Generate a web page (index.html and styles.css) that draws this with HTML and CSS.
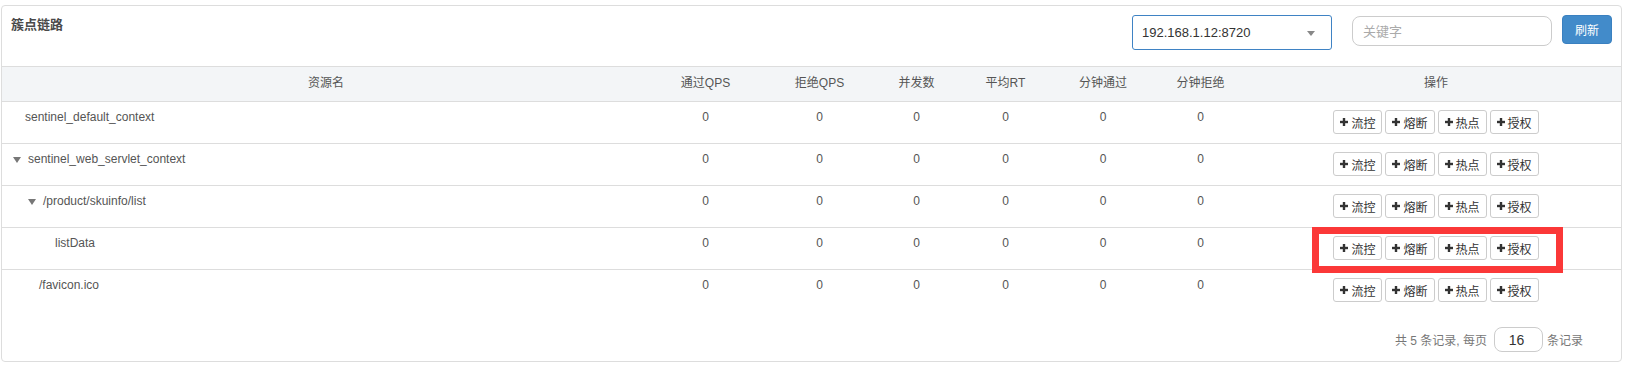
FILE: index.html
```html
<!DOCTYPE html>
<html lang="zh-CN">
<head>
<meta charset="utf-8">
<title>簇点链路</title>
<link rel="stylesheet" href="styles.css">
</head>
<body>
<div class="panel">
  <div class="panel-head">
    <div class="title">簇点链路</div>
    <div class="tools">
      <div class="select"><span class="select-text">192.168.1.12:8720</span><span class="caret"></span></div>
      <input class="search" type="text" placeholder="关键字">
      <button class="btn-refresh" type="button">刷新</button>
    </div>
  </div>

  <div class="table">
    <div class="tr thead">
      <div class="th">资源名</div>
      <div class="th">通过QPS</div>
      <div class="th">拒绝QPS</div>
      <div class="th">并发数</div>
      <div class="th">平均RT</div>
      <div class="th">分钟通过</div>
      <div class="th">分钟拒绝</div>
      <div class="th">操作</div>
    </div>

    <div class="tr">
      <div class="td name leaf-0">sentinel_default_context</div>
      <div class="td num">0</div><div class="td num">0</div><div class="td num">0</div>
      <div class="td num">0</div><div class="td num">0</div><div class="td num">0</div>
      <div class="td ops"><div class="btns">
        <button class="btn" type="button"><svg class="plus" viewBox="0 0 8 8"><rect x="2.8" y="0" width="2.4" height="8"/><rect x="0" y="2.8" width="8" height="2.4"/></svg>流控</button>
        <button class="btn" type="button"><svg class="plus" viewBox="0 0 8 8"><rect x="2.8" y="0" width="2.4" height="8"/><rect x="0" y="2.8" width="8" height="2.4"/></svg>熔断</button>
        <button class="btn" type="button"><svg class="plus" viewBox="0 0 8 8"><rect x="2.8" y="0" width="2.4" height="8"/><rect x="0" y="2.8" width="8" height="2.4"/></svg>热点</button>
        <button class="btn" type="button"><svg class="plus" viewBox="0 0 8 8"><rect x="2.8" y="0" width="2.4" height="8"/><rect x="0" y="2.8" width="8" height="2.4"/></svg>授权</button>
      </div></div>
    </div>

    <div class="tr">
      <div class="td name branch-0"><span class="tri"></span>sentinel_web_servlet_context</div>
      <div class="td num">0</div><div class="td num">0</div><div class="td num">0</div>
      <div class="td num">0</div><div class="td num">0</div><div class="td num">0</div>
      <div class="td ops"><div class="btns">
        <button class="btn" type="button"><svg class="plus" viewBox="0 0 8 8"><rect x="2.8" y="0" width="2.4" height="8"/><rect x="0" y="2.8" width="8" height="2.4"/></svg>流控</button>
        <button class="btn" type="button"><svg class="plus" viewBox="0 0 8 8"><rect x="2.8" y="0" width="2.4" height="8"/><rect x="0" y="2.8" width="8" height="2.4"/></svg>熔断</button>
        <button class="btn" type="button"><svg class="plus" viewBox="0 0 8 8"><rect x="2.8" y="0" width="2.4" height="8"/><rect x="0" y="2.8" width="8" height="2.4"/></svg>热点</button>
        <button class="btn" type="button"><svg class="plus" viewBox="0 0 8 8"><rect x="2.8" y="0" width="2.4" height="8"/><rect x="0" y="2.8" width="8" height="2.4"/></svg>授权</button>
      </div></div>
    </div>

    <div class="tr">
      <div class="td name branch-1"><span class="tri"></span>/product/skuinfo/list</div>
      <div class="td num">0</div><div class="td num">0</div><div class="td num">0</div>
      <div class="td num">0</div><div class="td num">0</div><div class="td num">0</div>
      <div class="td ops"><div class="btns">
        <button class="btn" type="button"><svg class="plus" viewBox="0 0 8 8"><rect x="2.8" y="0" width="2.4" height="8"/><rect x="0" y="2.8" width="8" height="2.4"/></svg>流控</button>
        <button class="btn" type="button"><svg class="plus" viewBox="0 0 8 8"><rect x="2.8" y="0" width="2.4" height="8"/><rect x="0" y="2.8" width="8" height="2.4"/></svg>熔断</button>
        <button class="btn" type="button"><svg class="plus" viewBox="0 0 8 8"><rect x="2.8" y="0" width="2.4" height="8"/><rect x="0" y="2.8" width="8" height="2.4"/></svg>热点</button>
        <button class="btn" type="button"><svg class="plus" viewBox="0 0 8 8"><rect x="2.8" y="0" width="2.4" height="8"/><rect x="0" y="2.8" width="8" height="2.4"/></svg>授权</button>
      </div></div>
    </div>

    <div class="tr">
      <div class="td name leaf-2">listData</div>
      <div class="td num">0</div><div class="td num">0</div><div class="td num">0</div>
      <div class="td num">0</div><div class="td num">0</div><div class="td num">0</div>
      <div class="td ops"><div class="btns">
        <button class="btn" type="button"><svg class="plus" viewBox="0 0 8 8"><rect x="2.8" y="0" width="2.4" height="8"/><rect x="0" y="2.8" width="8" height="2.4"/></svg>流控</button>
        <button class="btn" type="button"><svg class="plus" viewBox="0 0 8 8"><rect x="2.8" y="0" width="2.4" height="8"/><rect x="0" y="2.8" width="8" height="2.4"/></svg>熔断</button>
        <button class="btn" type="button"><svg class="plus" viewBox="0 0 8 8"><rect x="2.8" y="0" width="2.4" height="8"/><rect x="0" y="2.8" width="8" height="2.4"/></svg>热点</button>
        <button class="btn" type="button"><svg class="plus" viewBox="0 0 8 8"><rect x="2.8" y="0" width="2.4" height="8"/><rect x="0" y="2.8" width="8" height="2.4"/></svg>授权</button>
        <span class="highlight"></span>
      </div></div>
    </div>

    <div class="tr">
      <div class="td name leaf-1">/favicon.ico</div>
      <div class="td num">0</div><div class="td num">0</div><div class="td num">0</div>
      <div class="td num">0</div><div class="td num">0</div><div class="td num">0</div>
      <div class="td ops"><div class="btns">
        <button class="btn" type="button"><svg class="plus" viewBox="0 0 8 8"><rect x="2.8" y="0" width="2.4" height="8"/><rect x="0" y="2.8" width="8" height="2.4"/></svg>流控</button>
        <button class="btn" type="button"><svg class="plus" viewBox="0 0 8 8"><rect x="2.8" y="0" width="2.4" height="8"/><rect x="0" y="2.8" width="8" height="2.4"/></svg>熔断</button>
        <button class="btn" type="button"><svg class="plus" viewBox="0 0 8 8"><rect x="2.8" y="0" width="2.4" height="8"/><rect x="0" y="2.8" width="8" height="2.4"/></svg>热点</button>
        <button class="btn" type="button"><svg class="plus" viewBox="0 0 8 8"><rect x="2.8" y="0" width="2.4" height="8"/><rect x="0" y="2.8" width="8" height="2.4"/></svg>授权</button>
      </div></div>
    </div>
  </div>

  <div class="pager">
    <span class="pager-text">共 5 条记录, 每页</span>
    <input class="page-size" type="text" value="16">
    <span class="pager-text">条记录</span>
  </div>
</div>
</body>
</html>
```

FILE: styles.css
```css
html, body {
  margin: 0;
  padding: 0;
  background: #fff;
}

body {
  font-family: "Liberation Sans", Arial, "Noto Sans CJK SC", sans-serif;
  font-size: 12px;
  color: #555;
}

.panel {
  box-sizing: border-box;
  width: 1621px;
  margin: 5px 0 0 1px;
  border: 1px solid #ddd;
  border-radius: 4px;
  background: #fff;
}

/* ---------- header ---------- */
.panel-head {
  display: flex;
  align-items: flex-start;
  height: 60px;
  padding: 0 9px 0 9px;
}

.title {
  flex: 1;
  margin-top: 10px;
  line-height: 18px;
  font-size: 13px;
  font-weight: bold;
  color: #4a4a4a;
}

.tools {
  display: flex;
  align-items: flex-start;
}

.select {
  box-sizing: border-box;
  display: flex;
  align-items: center;
  justify-content: space-between;
  width: 200px;
  height: 35px;
  margin-top: 9px;
  padding: 0 16px 0 9px;
  border: 1px solid #3f83c4;
  border-radius: 3px;
  background: #fff;
  font-size: 13px;
  color: #333;
}

.caret {
  width: 0;
  height: 0;
  margin-top: 1px;
  border-left: 4px solid transparent;
  border-right: 4px solid transparent;
  border-top: 5px solid #888;
}

.search {
  box-sizing: border-box;
  width: 200px;
  height: 30px;
  margin: 10px 0 0 20px;
  padding: 0 10px;
  border: 1px solid #ccc;
  border-radius: 8px;
  outline: none;
  font-family: inherit;
  font-size: 13px;
  color: #333;
}

.search::placeholder {
  color: #aaa;
}

.btn-refresh {
  box-sizing: border-box;
  width: 50px;
  height: 29px;
  margin: 9px 0 0 10px;
  padding: 0;
  border: 1px solid #3a80c0;
  border-radius: 4px;
  background: #428bca;
  font-family: inherit;
  font-size: 12px;
  color: #fff;
}

/* ---------- table ---------- */
.table {
  border-top: 1px solid #ddd;
}

.tr {
  display: grid;
  grid-template-columns: 648px 111px 117px 77px 101px 94px 101px 1fr;
  height: 41px;
  border-bottom: 1px solid #ddd;
}

.tr:last-child {
  border-bottom: none;
}

.thead {
  height: 34px;
  background: #f3f5f7;
}

.th {
  padding-top: 8px;
  line-height: 17px;
  text-align: center;
  color: #555;
  white-space: nowrap;
}

.td {
  padding-top: 7px;
  line-height: 17px;
  white-space: nowrap;
}

.num {
  text-align: center;
}

.name {
  display: flex;
  align-items: center;
  align-self: start;
  height: 17px;
}

.leaf-0 { padding-left: 23px; }
.leaf-1 { padding-left: 37px; }
.leaf-2 { padding-left: 53px; }
.branch-0 { padding-left: 11px; }
.branch-1 { padding-left: 26px; }

.tri {
  width: 0;
  height: 0;
  margin: 1px 7px 0 0;
  border-left: 4px solid transparent;
  border-right: 4px solid transparent;
  border-top: 6px solid #777;
}

.ops {
  display: flex;
  justify-content: center;
  align-items: flex-start;
  padding-top: 8px;
}

.btns {
  position: relative;
  display: flex;
  gap: 3px;
}

.btn {
  box-sizing: border-box;
  display: inline-flex;
  align-items: center;
  gap: 3px;
  height: 24px;
  padding: 0 6px;
  border: 1px solid #ccc;
  border-radius: 3px;
  background: #fff;
  font-family: inherit;
  font-size: 12px;
  color: #333;
}

.plus {
  width: 8px;
  height: 8px;
  fill: #333;
}

.highlight {
  position: absolute;
  top: -9px;
  right: -24px;
  bottom: -13px;
  left: -21px;
  border: 7px solid #fb3838;
  pointer-events: none;
}

/* ---------- pager ---------- */
.pager {
  display: flex;
  align-items: center;
  justify-content: flex-end;
  height: 50px;
  padding: 7px 38px 0 0;
  box-sizing: border-box;
  color: #777;
}

.page-size {
  box-sizing: border-box;
  width: 49px;
  height: 25px;
  margin: 0 4px 0 7px;
  padding: 0 4px 0 0;
  border: 1px solid #ccc;
  border-radius: 8px;
  outline: none;
  text-align: center;
  font-family: inherit;
  font-size: 14px;
  color: #333;
}
```
